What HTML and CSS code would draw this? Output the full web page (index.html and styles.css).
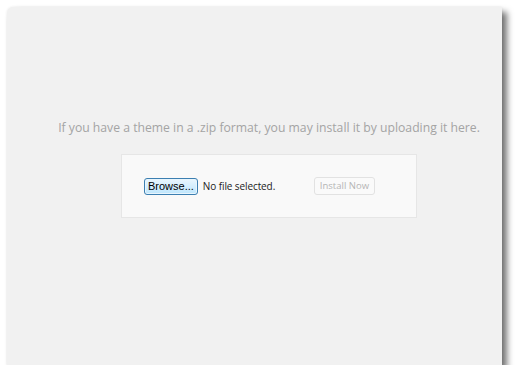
FILE: index.html
```html
<!DOCTYPE html>
<html lang="en">
<head>
    <meta charset="UTF-8">
    <title>Upload Theme</title>
    <link rel="stylesheet" href="styles.css">
</head>
<body>
    <div class="window">
        <p class="install-help">If you have a theme in a .zip format, you may install it by uploading it here.</p>
        <form class="upload-form">
            <span class="browse-btn">Browse...</span>
            <span class="file-name">No file selected.</span>
            <button type="button" class="install-btn" disabled>Install Now</button>
        </form>
    </div>
</body>
</html>
```

FILE: styles.css
```css
body {
    margin: 0;
    background-color: #fff;
    font-family: "Open Sans", sans-serif;
}

.window {
    margin: 7px 0 0 7px;
    width: 495px;
    height: 358px;
    box-sizing: border-box;
    padding: 112px 0 0 29px;
    background-color: #f1f1f1;
    border-radius: 6px 0 0 0;
    box-shadow: 5px 5px 6px rgba(0, 0, 0, 0.55), 0 0 3px rgba(0, 0, 0, 0.08);
    display: flex;
    flex-direction: column;
    align-items: center;
}

.install-help {
    margin: 0;
    font-size: 12.2px;
    line-height: 18px;
    color: #a4a4a4;
    white-space: nowrap;
}

.upload-form {
    margin-top: 17px;
    width: 296px;
    height: 64px;
    box-sizing: border-box;
    padding: 0 0 0 22px;
    background-color: #f9f9f9;
    border: 1px solid #e6e6e6;
    display: flex;
    align-items: center;
}

.browse-btn {
    font-family: "Liberation Sans", Arial, sans-serif;
    font-size: 11px;
    line-height: 15px;
    color: #000;
    padding: 0 3px;
    border: 1px solid #3c7fb1;
    border-radius: 3px;
    background: linear-gradient(#eaf6fd, #bee6fd);
    box-shadow: inset 0 0 0 1px #e8f5fd;
}

.file-name {
    margin-left: 5px;
    font-size: 10px;
    letter-spacing: -0.1px;
    color: #222;
    width: 111px;
}

.install-btn {
    font-family: "Open Sans", sans-serif;
    font-size: 9.5px;
    line-height: 16px;
    padding: 0 5px;
    color: #b5b5b5;
    background-color: #fafafa;
    border: 1px solid #e2e2e2;
    border-radius: 3px;
}
```
